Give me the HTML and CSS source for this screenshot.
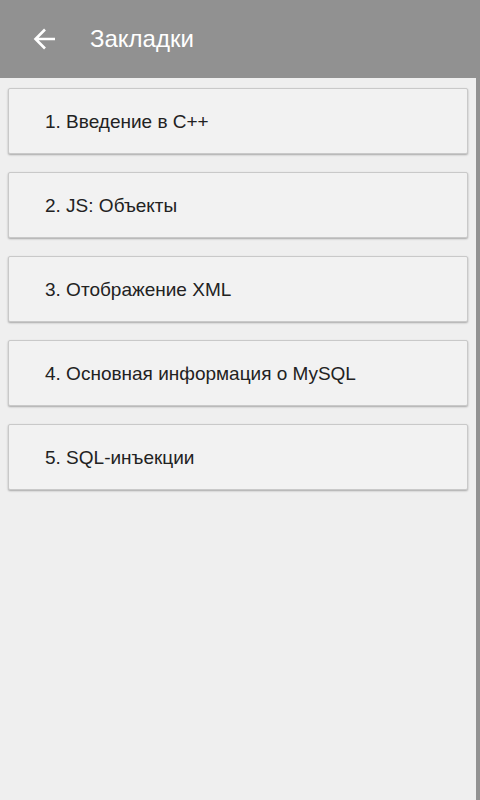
FILE: index.html
```html
<!DOCTYPE html>
<html>
<head>
    <title>Закладки</title>
    <link rel="stylesheet" href="styles.css">
</head>
<body>
    <div class="header">
        <button class="back" aria-label="Назад">
            <svg width="24" height="24" viewBox="0 0 24 24">
                <path d="M22 12H3M12 2.5L2.5 12L12 21.5" fill="none" stroke="#fff" stroke-width="2.6"/>
            </svg>
        </button>
        <h1 class="title">Закладки</h1>
    </div>
    <div class="page">
        <div class="list">
            <div class="card">1. Введение в C++</div>
            <div class="card">2. JS: Объекты</div>
            <div class="card">3. Отображение XML</div>
            <div class="card">4. Основная информация о MySQL</div>
            <div class="card">5. SQL-инъекции</div>
        </div>
        <div class="scrollbar"></div>
    </div>
</body>
</html>
```

FILE: styles.css
```css
body {
    margin: 0;
    background-color: #efefef;
    font-family: "Liberation Sans", Arial, sans-serif;
    height: 800px;
    display: flex;
    flex-direction: column;
}
.header {
    background-color: #919191;
    height: 78px;
    display: flex;
    align-items: center;
    flex-shrink: 0;
}
.back {
    background: none;
    border: none;
    padding: 0;
    margin-left: 33px;
    width: 24px;
    height: 24px;
    display: flex;
}
.title {
    margin: 0 0 0 33px;
    color: #fff;
    font-size: 24px;
    font-weight: normal;
}
.page {
    flex: 1;
    display: flex;
}
.list {
    flex: 1;
    padding: 10px 8px 0 8px;
    display: flex;
    flex-direction: column;
    gap: 18px;
}
.card {
    height: 64px;
    background-color: #f2f2f2;
    border: 1px solid #c9c9c9;
    border-radius: 2px;
    box-shadow: 0 1px 2px rgba(0, 0, 0, 0.3);
    display: flex;
    align-items: center;
    padding-left: 36px;
    padding-top: 2px;
    box-sizing: border-box;
    height: 66px;
    font-size: 19px;
    color: #222;
}
.scrollbar {
    width: 4px;
    background-color: #929292;
}
```
